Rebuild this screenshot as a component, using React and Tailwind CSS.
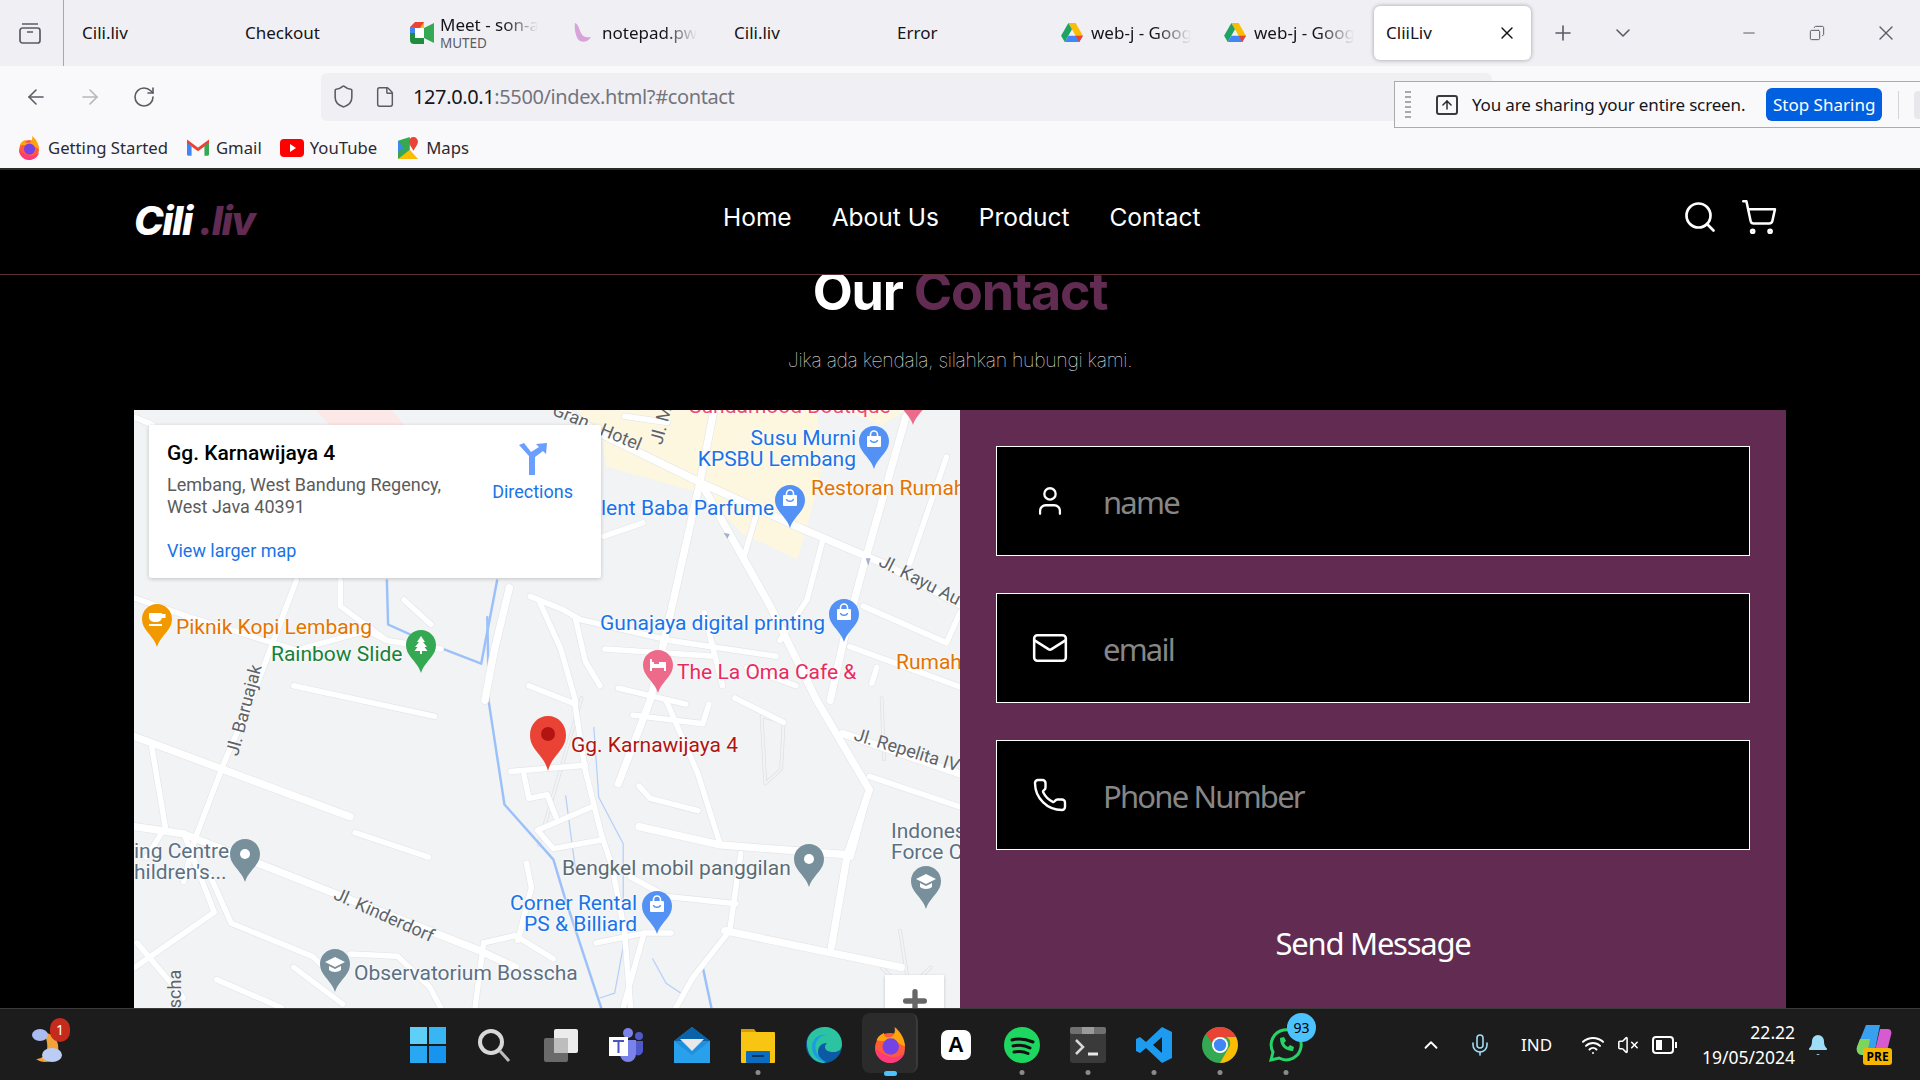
import React from 'react';
import { ArrowLeft, ArrowRight, ChevronDown, ChevronUp, Copy, Mail, Mic, Minus, Phone, Plus, RotateCw, Search, ShoppingCart, User, VolumeX, Wifi, X, File, Shield, Bell, ArrowUp } from 'lucide-react';

const TABS = ['Cili.liv', 'Checkout', 'Meet', 'notepad', 'Cili.liv', 'Error', 'drive', 'drive'];

const ROADS_MAIN = [
  '449,327 490,354 574,395 651,430 721,460 790,497',
  '583,335 572,392 550,490 542,525 531,572 505,640',
  '574,397 629,495 667,572 710,645 692,698 679,773',
  '740,340 705,463 689,523 678,572',
  '106,600 286,667',
  '110,675 150,681 211,705 391,776 421,790',
  '688,599 790,634',
  '522,675 588,690 692,698',
  '592,760 736,790',
  '416,480 404,530 396,572',
];

const ROADS = [
  '672,441 659,490 637,523',
  '618,419 607,457',
  '433,487 460,498 474,506 547,523 634,536',
  '494,530 583,536',
  '705,495 773,525 784,500',
  '694,528 784,561',
  '716,545 712,558',
  '773,373 743,460',
  '525,427 493,438',
  '106,487 155,504 242,531 300,515 316,523',
  '242,474 205,572 183,623 159,686 150,720',
  '278,474 278,495 316,523 360,530',
  '172,716 189,754 255,781 275,800',
  '286,779 325,781 351,806 360,823',
  '395,770 388,823',
  '395,770 421,764 452,783',
  '430,705 434,725 423,768',
  '469,572 478,629 491,681 500,708 510,760 515,823',
  '417,630 478,625',
  '428,633 432,652 447,649 454,667',
  '483,659 439,678 452,693 491,686',
  '544,572 570,632 588,689',
  '710,634 784,659',
  '605,697 596,760 566,798 552,823',
  '515,716 544,732 601,738',
  '487,770 526,762 548,762',
  '526,762 509,823',
  '522,642 531,652 570,662',
  '517,584 574,591 579,575',
  '710,645 695,700',
  '124,610 135,675 120,700',
  '150,680 175,745 110,790',
  '112,770 150,815',
  '177,800 230,823',
  '240,790 280,820',
  '350,700 290,680',
  '240,560 355,585',
  '440,490 458,530 470,572',
  '575,500 590,560',
  '108,340 125,347',
  '510,340 545,345',
  '470,505 478,540 490,560',
  '505,562 560,575',
  '432,560 470,575',
  '600,570 640,590',
  '610,545 650,560',
  '330,490 352,510',
];

const ROADS_THIN = [
  '622,585 625,640 638,628 640,590 622,585',
  '720,570 722,620',
  '735,760 745,823',
  '720,790 740,810 760,790',
  '440,690 475,570',
];

const WATER = [
  '316,474 317,510 357,528 393,542 406,474',
  '398,504 399,555 399,572 412,657 452,702 461,732 491,823',
  '574,790 581,823',
];
const WATER_THIN = [
  '485,594 489,651 509,689 509,773 502,811 490,815',
  '533,783 544,803 559,813',
  '462,650 470,710',
];

function Pin({ pos, color = '#5491f5', children }) {
  return (
    <svg viewBox="0 0 30 43" className={`absolute w-[30px] h-[43px] ${pos}`}>
      <path d="M15 0C6.7 0 0 6.7 0 15c0 5 2 8.5 5 12.5 4 5 8 9 10 15.5 2-6.5 6-10.5 10-15.5 3-4 5-7.5 5-12.5C30 6.7 23.3 0 15 0z" fill={color} />
      {children}
    </svg>
  );
}

const Bag = () => (
  <g fill="none" stroke="#fff">
    <rect x="8" y="10" width="14" height="11" rx="1" fill="#fff" stroke="none" />
    <path d="M11.5 10V8.5a3.5 3.5 0 0 1 7 0V10" strokeWidth="1.6" />
    <path d="M11.5 14c.5 3 6.500 3 7 0" stroke="#5491f5" strokeWidth="1.4" />
  </g>
);
const Dot = () => <circle cx="15" cy="15" r="5" fill="#fff" />;
const Cap = () => (
  <g fill="#fff">
    <path d="M15 8l10 5-10 5-10-5z" />
    <path d="M9 17v4c3 2.500 9 2.500 12 0v-4l-6 3z" />
  </g>
);

const LABEL = "absolute mt-[1px] -translate-y-1/2 whitespace-nowrap text-[21px] leading-[21px] [text-shadow:0_0_2px_#fff,0_0_3px_#fff]";
const ROAD_LABEL = "absolute -translate-x-1/2 -translate-y-1/2 whitespace-nowrap text-[18px] leading-none text-[#5f6368] [text-shadow:0_0_2px_#fff]";

function MapPanel() {
  return (
    <div className="relative w-[826px] h-full overflow-hidden bg-[#f1f3f4] font-['Roboto',sans-serif]">
      <svg viewBox="109.500 335 674.500 488" className="absolute left-0 top-0 w-[826px] h-[598px]" fill="none" strokeLinecap="round" strokeLinejoin="round">
        <path d="M555 335H667L672 381 659 430 651 457 607 436 574 403 495 381 491 354 470 335z" fill="#fef7e0" />
        <path d="M258 335H320L330 347H270z" fill="#fce8e6" />
        <path d="M690 335H740L720 347z" fill="#fef7e0" />
        {ROADS_THIN.map((p) => <polyline key={p} points={p} stroke="#dfe1e5" strokeWidth="3" />)}
        {ROADS_THIN.map((p) => <polyline key={p} points={p} stroke="#f1f3f4" strokeWidth="1.800" />)}
        {WATER.map((p) => <polyline key={p} points={p} stroke="#9cc0f9" strokeWidth="2" />)}
        {WATER_THIN.map((p) => <polyline key={p} points={p} stroke="#b4d0fa" strokeWidth="1" />)}
        {ROADS.map((p) => <polyline key={p} points={p} stroke="#e3e5e8" strokeWidth="5.500" />)}
        {ROADS_MAIN.map((p) => <polyline key={p} points={p} stroke="#e3e5e8" strokeWidth="7" />)}
        {ROADS.map((p) => <polyline key={p} points={p} stroke="#fff" strokeWidth="4.500" />)}
        {ROADS_MAIN.map((p) => <polyline key={p} points={p} stroke="#fff" strokeWidth="6" />)}
        <path d="M594 440l-3-5 5 1zM709 462l-2-6h4z" fill="#a6b1cf" />
      </svg>

      <div className={`${LABEL} left-[555px] top-[-5px] text-[#ea4c70]`}>Sundamood Boutique</div>
      <div className={`${LABEL} right-[104px] top-[38px] text-right text-[#1a73e8]`}>Susu Murni<br />KPSBU Lembang</div>
      <div className={`${LABEL} left-[677px] top-[77px] text-[#e37400]`}>Restoran Rumah</div>
      <div className={`${LABEL} left-[467px] top-[97px] text-[#1a73e8]`}>lent Baba Parfume</div>
      <div className={`${LABEL} left-[466px] top-[212px] text-[#1a73e8]`}>Gunajaya digital printing</div>
      <div className={`${LABEL} left-[762px] top-[251px] text-[#e37400]`}>Rumah</div>
      <div className={`${LABEL} left-[543px] top-[261px] text-[#ea2a5c]`}>The La Oma Cafe &amp;</div>
      <div className={`${LABEL} left-[42px] top-[216px] text-[#e37400]`}>Piknik Kopi Lembang</div>
      <div className={`${LABEL} left-[137px] top-[243px] text-[#188038]`}>Rainbow Slide</div>
      <div className={`${LABEL} left-[437px] top-[334px] text-[#b31412]`}>Gg. Karnawijaya 4</div>
      <div className={`${LABEL} left-0 top-[451px] text-[#5b7083]`}>ing Centre<br />hildren's...</div>
      <div className={`${LABEL} left-[428px] top-[457px] text-[#5b6b75]`}>Bengkel mobil panggilan</div>
      <div className={`${LABEL} left-[757px] top-[431px] text-[#5b7083]`}>Indones<br />Force C</div>
      <div className={`${LABEL} right-[323px] top-[503px] text-right text-[#1a73e8]`}>Corner Rental<br />PS &amp; Billiard</div>
      <div className={`${LABEL} left-[220px] top-[562px] text-[#5b7083]`}>Observatorium Bosscha</div>

      <div className={`${ROAD_LABEL} left-[437px] top-[6px] rotate-[22deg]`}>Gran</div>
      <div className={`${ROAD_LABEL} left-[487px] top-[27px] rotate-[22deg]`}>Hotel</div>
      <div className={`${ROAD_LABEL} left-[527px] top-[15px] -rotate-[75deg]`}>Jl. M</div>
      <div className={`${ROAD_LABEL} left-[786px] top-[170px] rotate-[27deg]`}>Jl. Kayu Au</div>
      <div className={`${ROAD_LABEL} left-[773px] top-[340px] rotate-[17deg]`}>Jl. Repelita IV</div>
      <div className={`${ROAD_LABEL} left-[110px] top-[300px] -rotate-[75deg]`}>Jl. Baruajak</div>
      <div className={`${ROAD_LABEL} left-[250px] top-[505px] rotate-[24deg]`}>Jl. Kinderdorf</div>
      <div className={`${ROAD_LABEL} left-[41px] top-[579px] -rotate-90`}>scha</div>

      <Pin pos="left-[764px] top-[-28px]" color="#ee6a8b" />
      <Pin pos="left-[725px] top-[16px]"><Bag /></Pin>
      <Pin pos="left-[641px] top-[75px]"><Bag /></Pin>
      <Pin pos="left-[695px] top-[189px]"><Bag /></Pin>
      <Pin pos="left-[509px] top-[240px]" color="#ee6a8b">
        <path d="M7 9h2v3h14v9h-2v-3H9v3H7z" fill="#fff" /><rect x="11" y="11" width="5" height="3" fill="#ee6a8b" />
      </Pin>
      <Pin pos="left-[8px] top-[194px]" color="#f29900">
        <path d="M7 9h13v4a5 5 0 0 1-5 5h-3a5 5 0 0 1-5-5zM20 10h3.500v4H20zM7 20h13v2H7z" fill="#fff" />
      </Pin>
      <Pin pos="left-[272px] top-[220px]" color="#34a853">
        <path d="M15 6l4 6h-2l4 5h-2.500l3 4H16v3h-2v-3H8.500l3-4H9l4-5h-2z" fill="#fff" />
      </Pin>
      <Pin pos="left-[96px] top-[429px]" color="#78909c"><Dot /></Pin>
      <Pin pos="left-[660px] top-[434px]" color="#78909c"><Dot /></Pin>
      <Pin pos="left-[777px] top-[456px]" color="#78909c"><Cap /></Pin>
      <Pin pos="left-[508px] top-[481px]"><Bag /></Pin>
      <Pin pos="left-[186px] top-[539px]" color="#78909c"><Cap /></Pin>
      <svg viewBox="0 0 36 55" className="absolute left-[396px] top-[306px] w-[36px] h-[55px]">
        <path d="M18 0C8 0 0 8 0 19c0 7 3 12 7 17 5 6 9 11 11 19 2-8 6-13 11-19 4-5 7-10 7-17C36 8 28 0 18 0z" fill="#ea4335" />
        <circle cx="18" cy="18" r="7" fill="#b31412" />
      </svg>

      <div className="absolute left-[15px] top-[15px] w-[452px] h-[153px] flex justify-between bg-white rounded-[2px] shadow-[0_1px_4px_rgba(0,0,0,0.2)] pl-[18px] pt-[16px] pr-[28px]">
        <div>
          <div className="text-[21px] leading-[24px] font-medium text-black">Gg. Karnawijaya 4</div>
          <div className="mt-[9px] text-[18px] leading-[22px] text-[#5b5b5b]">Lembang, West Bandung Regency,<br />West Java 40391</div>
          <div className="mt-[22px] text-[18px] leading-[22px] text-[#1a73e8]">View larger map</div>
        </div>
        <div className="flex flex-col items-center pt-[2px]">
          <svg viewBox="0 0 30 32" className="w-[30px] h-[32px]">
            <path d="M1 2l5-2 7 9 8-5-3-3 11-1-1 11-3-3-8 6v18h-6V13z" fill="#6a9eff" />
          </svg>
          <div className="mt-[6px] text-[18px] leading-[22px] text-[#1a73e8]">Directions</div>
        </div>
      </div>

      <div className="absolute left-[751px] top-[565px] w-[59px] h-[59px] flex justify-center pt-[10px] bg-white shadow-[0_1px_3px_rgba(0,0,0,0.2)]">
        <Plus size={32} strokeWidth={4} className="text-[#666]" />
      </div>
    </div>
  );
}

function Field({ icon: Icon, text, size = 34 }) {
  return (
    <div className="flex items-center h-[110px] bg-black border border-white">
      <div className="w-[106px] flex justify-center text-white">
        <Icon size={size} strokeWidth={1.6} />
      </div>
      <div className="mt-[3px] text-[31px] leading-none text-[#868686] font-['Noto_Sans',sans-serif] tracking-[-1.8px]">{text}</div>
    </div>
  );
}

function TabIconMeet() {
  return (
    <svg viewBox="0 0 24 22" className="w-[24px] h-[22px]">
      <path d="M0 5l5-5h9v6H5v5H0z" fill="#ea4335" />
      <path d="M0 11h5v5h9v6H4a4 4 0 0 1-4-4z" fill="#1e8e3e" />
      <path d="M5 6h9v10H5z" fill="#fff" />
      <path d="M14 6l10-5v20l-10-5z" fill="#34a853" />
      <path d="M0 5h5v6H0z" fill="#4285f4" />
      <path d="M14 0v6h-4z" fill="#fbbc04" />
    </svg>
  );
}

function DriveIcon() {
  return (
    <svg viewBox="0 0 24 22" className="w-[22px] h-[20px] shrink-0">
      <path d="M8 0h8l8 14h-8z" fill="#fbbc04" />
      <path d="M8 0l4 7L4 21l-4-7z" fill="#1ea362" />
      <path d="M4 21l4-7h16l-4 7z" fill="#4285f4" />
      <path d="M16 14h8l-4 7z" fill="#ea4335" />
    </svg>
  );
}

function FirefoxIcon({ size = 24 }) {
  return (
    <svg viewBox="0 0 24 24" width={size} height={size}>
      <circle cx="12" cy="14" r="10" fill="#ff5a3c" />
      <path d="M3 9c1-3 3-4 5-5 0 2 1 3 3 3 3 0 5-3 4-7 4 3 7 8 7 13l-6-3z" fill="#ffa30f" />
      <circle cx="12.500" cy="13" r="5.500" fill="#7542e5" />
      <path d="M2 14c1 6 5 10 10 10 4 0 8-2 10-7-3 3-8 4-12 2-3-1-6-3-8-5z" fill="#ff3a7c" />
    </svg>
  );
}

function Tabs() {
  const fade = "overflow-hidden [mask-image:linear-gradient(to_right,#000_65%,transparent)]";
  return (
    <div className="flex items-center h-[66px] bg-[#f0f0f4] text-[17px] text-[#15141a] font-['Noto_Sans',sans-serif]">
      <div className="flex items-center justify-center w-[64px] h-full border-r border-[#a8a8ac]">
        <svg viewBox="0 0 24 24" className="w-[24px] h-[24px] -ml-[4px] text-[#5b5b66]" fill="none" stroke="currentColor" strokeWidth="1.700">
          <rect x="2" y="7" width="20" height="15" rx="2.500" /><path d="M4 3h16M9 11h6" />
        </svg>
      </div>
      <div className="w-[6px]" />
      {TABS.map((t, i) => (
        <div key={i} className="flex items-center w-[163px] h-full pl-[12px] whitespace-nowrap">
          {t === 'Meet' && (
            <div className="flex items-center gap-[6px] pl-[2px]">
              <TabIconMeet />
              <div className="-mt-[1px]">
                <div className={`w-[98px] leading-[20px] ${fade}`}>Meet - son-a</div>
                <div className="text-[13.500px] leading-[16px] text-[#5b5b66]">MUTED</div>
              </div>
            </div>
          )}
          {t === 'notepad' && (
            <div className="flex items-center gap-[9px] pl-[2px]">
              <svg viewBox="0 0 20 22" className="w-[20px] h-[22px]"><path d="M2 1c3 1 4 5 6 10 2 4 5 5 10 4-2 4-7 6-11 4C3 17 1 7 2 1z" fill="#d8a3d8" /></svg>
              <span className={`w-[95px] ${fade}`}>notepad.pw</span>
            </div>
          )}
          {t === 'drive' && (
            <div className="flex items-center gap-[8px] pl-[1px]">
              <DriveIcon />
              <span className={`w-[100px] ${fade}`}>web-j - Goog</span>
            </div>
          )}
          {!['Meet', 'notepad', 'drive'].includes(t) && <span>{t}</span>}
        </div>
      ))}
      <div className="flex items-center justify-between w-[157px] h-[54px] pl-[12px] pr-[14px] bg-white rounded-[6px] shadow-[0_0_4px_rgba(0,0,0,0.35)]">
        <span>CliiLiv</span>
        <X size={20} strokeWidth={1.7} />
      </div>
      <div className="flex items-center text-[#5b5b66]">
        <Plus size={24} strokeWidth={1.6} className="ml-[20px]" />
        <ChevronDown size={24} strokeWidth={1.6} className="ml-[36px]" />
        <Minus size={18} strokeWidth={1.4} className="ml-[105px]" />
        <Copy size={16} strokeWidth={1.5} className="ml-[51px] -scale-x-100" />
        <X size={24} strokeWidth={1.4} className="ml-[49px]" />
      </div>
    </div>
  );
}

function Toolbar() {
  return (
    <div className="relative h-[104px] bg-[#f9f9fb] border-b-2 border-[#2a2a2a] font-['Noto_Sans',sans-serif] text-[#15141a]">
      <div className="flex items-center h-[60px] pt-[1px]">
        <ArrowLeft size={24} strokeWidth={1.6} className="ml-[24px] text-[#5b5b66]" />
        <ArrowRight size={24} strokeWidth={1.6} className="ml-[30px] text-[#b6b6bb]" />
        <RotateCw size={24} strokeWidth={1.6} className="ml-[30px] text-[#5b5b66]" />
        <div className="flex items-center ml-[165px] w-[1171px] h-[48px] rounded-[6px] bg-[#f0f0f4]">
          <Shield size={25} strokeWidth={1.5} className="ml-[10px] text-[#5b5b66]" />
          <File size={22} strokeWidth={1.6} className="ml-[18px] text-[#5b5b66]" />
          <div className="ml-[17px] text-[20px] leading-none tracking-[-0.38px]">127.0.0.1<span className="text-[#74747c]">:5500/index.html?#contact</span></div>
        </div>
      </div>
      <div className="flex items-center h-[38px] pt-[5px] text-[16.700px] text-[#2b2a33]">
        <div className="ml-[17px]"><FirefoxIcon /></div>
        <span className="ml-[7px]">Getting Started</span>
        <svg viewBox="0 0 24 18" className="ml-[19px] w-[22px] h-[17px]">
          <path d="M1 17V3l11 8 11-8v14" fill="none" stroke="#ea4335" strokeWidth="3.200" />
          <path d="M0 4v12a2 2 0 0 0 2 2h3V7z" fill="#4285f4" />
          <path d="M24 4v12a2 2 0 0 1-2 2h-3V7z" fill="#34a853" />
        </svg>
        <span className="ml-[7px]">Gmail</span>
        <svg viewBox="0 0 24 18" className="ml-[18px] w-[24px] h-[18px]">
          <rect width="24" height="18" rx="4" fill="#f00" /><path d="M10 5l6 4-6 4z" fill="#fff" />
        </svg>
        <span className="ml-[6px]">YouTube</span>
        <svg viewBox="0 0 22 24" className="ml-[21px] w-[20px] h-[22px]">
          <path d="M0 4l13-4v22L0 24z" fill="#34a853" /><path d="M0 24l13-10 9 10z" fill="#fbbc04" /><path d="M0 4l6 8L0 16z" fill="#4285f4" />
          <path d="M17 0a5 5 0 0 1 5 5c0 3-3 6-5 10-2-4-5-7-5-10a5 5 0 0 1 5-5z" fill="#ea4335" />
        </svg>
        <span className="ml-[8px]">Maps</span>
      </div>

      {/* sharing indicator sits over the toolbar */}
      <div className="absolute left-[1394px] top-[15px] flex items-center w-[526px] h-[47px] bg-[#f9f9fb] border border-[#ababab] border-r-0 text-[17px]">
        <div className="ml-[10px] w-[6px] h-[28px] bg-[repeating-linear-gradient(to_bottom,#a8a8a8_0,#a8a8a8_2px,transparent_2px,transparent_5px)]" />
        <div className="ml-[25px] flex items-center justify-center w-[22px] h-[20px] border-2 border-[#3a3a40] rounded-[3px]">
          <ArrowUp size={14} strokeWidth={2.5} className="text-[#2a2a2e]" />
        </div>
        <span className="ml-[14px] whitespace-nowrap tracking-[-0.15px]">You are sharing your entire screen.</span>
        <div className="ml-[21px] flex items-center justify-center w-[116px] h-[33px] rounded-[6px] bg-[#0060df] text-white whitespace-nowrap">Stop Sharing</div>
        <div className="ml-[16px] w-px h-[28px] bg-[#d4d4d8]" />
        <div className="ml-[15px] w-[6px] h-[28px] rounded-l-[4px] bg-[#e8e8ec]" />
      </div>
    </div>
  );
}

function Header() {
  return (
    <div className="relative flex items-center h-[105px] bg-black border-b border-[#5c3232] text-white font-['Inter',sans-serif] shrink-0">
      <div className="absolute left-[134px] top-[23px] text-[40px] font-extrabold italic tracking-[-1.5px] leading-[56px]">
        Cili <span className="text-[#622c52]">.liv</span>
      </div>
      <div className="flex items-center gap-[40px] ml-[723px] -mt-[9px] text-[24.500px] leading-none">
        <span>Home</span>
        <span>About Us</span>
        <span>Product</span>
        <span>Contact</span>
      </div>
      <Search size={36} strokeWidth={1.8} className="absolute left-[1682px] top-[29px]" />
      <ShoppingCart size={38} strokeWidth={1.6} className="absolute left-[1740px] top-[28px]" />
    </div>
  );
}

function Taskbar() {
  const dot = 'absolute bottom-[-12px] left-1/2 -translate-x-1/2 w-[5px] h-[5px] rounded-full bg-[#8a8a8a]';
  return (
    <div className="relative flex items-center h-[72px] shrink-0 bg-[#1c1c1c] border-t border-[#3a3a3a] text-white font-['Noto_Sans',sans-serif]">
      <div className="relative w-[395px] h-full">
        <svg viewBox="0 0 36 40" className="absolute left-[30px] top-[18px] w-[36px] h-[40px]">
          <path d="M14 6c10 0 16 8 14 20-2 8-14 12-22 6 8 0 16-8 8-26z" fill="#f2a23a" />
          <ellipse cx="10" cy="8" rx="8" ry="6" fill="#a9bdf0" /><ellipse cx="22" cy="28" rx="10" ry="7" fill="#bccdf5" />
        </svg>
        <div className="absolute left-[50px] top-[9px] flex items-center justify-center w-[20px] h-[24px] rounded-full bg-[#c42b1c] text-[14px] leading-none">1</div>
      </div>

      <div className="flex items-center">
        <div className="flex justify-center w-[66px]">
          <svg viewBox="0 0 36 36" className="w-[36px] h-[36px]">
            <rect width="17" height="17" fill="#5ed0f8" /><rect x="19" width="17" height="17" fill="#38b6f3" />
            <rect y="19" width="17" height="17" fill="#2aa7f2" /><rect x="19" y="19" width="17" height="17" fill="#1694ee" />
          </svg>
        </div>
        <div className="flex justify-center w-[66px]">
          <svg viewBox="0 0 36 36" className="w-[36px] h-[36px]" fill="none">
            <circle cx="15" cy="15" r="11" stroke="#d8d8d8" strokeWidth="4" /><path d="M24 24l9 10" stroke="#bcbcbc" strokeWidth="3" />
          </svg>
        </div>
        <div className="flex justify-center w-[66px]">
          <svg viewBox="0 0 36 36" className="w-[36px] h-[36px]">
            <rect x="12" y="2" width="24" height="24" rx="2" fill="#ececec" /><rect x="2" y="11" width="24" height="24" rx="2" fill="#6a6a6a" />
            <rect x="12" y="11" width="14" height="15" fill="#bdbdbd" />
          </svg>
        </div>
        <div className="flex justify-center w-[66px]">
          <svg viewBox="0 0 36 36" className="w-[36px] h-[36px]">
            <circle cx="20" cy="6" r="5" fill="#7b83eb" /><circle cx="31" cy="9" r="4" fill="#5059c9" />
            <path d="M12 13h16v14a8 8 0 0 1-16 0z" fill="#7b83eb" /><path d="M28 14h7v10a5 5 0 0 1-7 4z" fill="#5059c9" />
            <rect x="1" y="10" width="19" height="19" fill="#fff" /><path d="M5 13h11v2h-4.500v11h-2V15H5z" fill="#4b53bc" />
          </svg>
        </div>
        <div className="flex justify-center w-[66px]">
          <svg viewBox="0 0 36 36" className="w-[36px] h-[36px]">
            <path d="M18 0l18 14v22H0V14z" fill="#1f8fe0" /><path d="M18 0L0 14h36z" fill="#0a62a8" />
            <path d="M6 12h24L18 24z" fill="#e8e8e8" /><path d="M0 14l18 14 18-14v22H0z" fill="#28a0ec" />
          </svg>
        </div>
        <div className="relative flex justify-center w-[66px]">
          <svg viewBox="0 0 36 36" className="w-[36px] h-[36px]">
            <path d="M1 2h13l3 4H1z" fill="#d99a00" /><rect x="1" y="5" width="34" height="31" rx="1" fill="#f9c513" />
            <rect x="6" y="24" width="24" height="12" rx="1" fill="#0c6cc0" /><rect x="12" y="28" width="12" height="2" fill="#04345f" />
          </svg>
          <div className={dot} />
        </div>
        <div className="flex justify-center w-[66px]">
          <svg viewBox="0 0 36 36" className="w-[36px] h-[36px]">
            <circle cx="18" cy="18" r="18" fill="#0c59a4" />
            <path d="M1 14C3 5 11 0 19 0c9 0 17 7 17 17 0 6-4 8-8 8-6 0-9-2-9-5 0-2 1-3 2-4-6 0-9 4-9 9 0 6 5 10 8 11C10 37 0 29 1 14z" fill="#2cc4a0" />
            <path d="M6 20c0-8 7-13 14-12-9 1-13 10-9 18 2 4 6 8 10 9-9 0-15-7-15-15z" fill="#1b9de2" />
          </svg>
        </div>
        <div className="relative flex justify-center items-center w-[66px]">
          <div className="absolute top-[-14px] w-[56px] h-[60px] rounded-[8px] bg-[#2b2b2b] border-r-2 border-[#3a3a3a]" />
          <div className="relative"><FirefoxIcon size={36} /></div>
          <div className="absolute bottom-[-13px] w-[13px] h-[5px] rounded-full bg-[#4cc2ff]" />
        </div>
        <div className="flex justify-center w-[66px]">
          <div className="flex items-center justify-center w-[30px] h-[30px] rounded-[7px] bg-white text-black text-[22px] font-bold leading-none font-['Liberation_Sans',sans-serif]">A</div>
        </div>
        <div className="relative flex justify-center w-[66px]">
          <svg viewBox="0 0 36 36" className="w-[36px] h-[36px]" fill="none">
            <circle cx="18" cy="18" r="18" fill="#1ed760" />
            <path d="M8 13c7-2 14-1 21 2M9 19c6-1.500 12-1 17 2M10 25c5-1 10-.5 14 1.500" stroke="#111" strokeWidth="3" strokeLinecap="round" />
          </svg>
          <div className={dot} />
        </div>
        <div className="relative flex justify-center w-[66px]">
          <svg viewBox="0 0 36 36" className="w-[36px] h-[36px]" fill="none">
            <rect width="36" height="36" rx="3" fill="#3a3a3a" /><rect width="36" height="7" rx="2" fill="#707070" /><rect x="12" width="12" height="7" fill="#9a9a9a" />
            <path d="M6 13l7 7-7 7" stroke="#d8d8d8" strokeWidth="2.500" /><path d="M18 27h10" stroke="#e8e8e8" strokeWidth="3" />
          </svg>
          <div className={dot} />
        </div>
        <div className="relative flex justify-center w-[66px]">
          <svg viewBox="0 0 36 36" className="w-[36px] h-[36px]">
            <path d="M26 0l10 5v26l-10 5-16-15-6 5-4-2V12l4-2 6 5zM26 10l-9 8 9 8z" fill="#1d9bf0" />
          </svg>
          <div className={dot} />
        </div>
        <div className="relative flex justify-center w-[66px]">
          <svg viewBox="0 0 36 36" className="w-[36px] h-[36px]">
            <circle cx="18" cy="18" r="18" fill="#34a853" />
            <path d="M18 0a18 18 0 0 1 16 10H18a8 8 0 0 0-8 6L4 7a18 18 0 0 1 14-7z" fill="#ea4335" />
            <path d="M34 10a18 18 0 0 1-16 26l8-14a8 8 0 0 0-1-12z" fill="#fbbc04" />
            <circle cx="18" cy="18" r="8" fill="#fff" /><circle cx="18" cy="18" r="6.200" fill="#4285f4" />
          </svg>
          <div className={dot} />
        </div>
        <div className="relative flex justify-center w-[66px]">
          <svg viewBox="0 0 36 36" className="w-[36px] h-[36px]" fill="none">
            <path d="M3 33l2-8a15 15 0 1 1 6 6z" stroke="#25d366" strokeWidth="3" />
            <path d="M12 11c0 8 5 13 13 13l1-4-4-2-2 2c-2-1-3-2-4-4l2-2-2-4z" fill="#25d366" />
          </svg>
          <div className="absolute top-[-14px] left-[34px] flex items-center justify-center w-[29px] h-[29px] rounded-full bg-[#4cc2ff] text-black text-[14px]">93</div>
          <div className={dot} />
        </div>
      </div>

      <div className="flex items-center flex-1 h-full">
        <ChevronUp size={22} strokeWidth={2} className="ml-[101px]" />
        <Mic size={24} strokeWidth={1.6} className="ml-[26px] text-[#9fdcf5]" />
        <span className="ml-[29px] text-[17px]">IND</span>
        <Wifi size={24} strokeWidth={2} className="ml-[29px]" />
        <VolumeX size={22} strokeWidth={1.7} className="ml-[12px]" />
        <svg viewBox="0 0 26 20" className="ml-[13px] w-[26px] h-[20px]" fill="none" stroke="#fff" strokeWidth="2">
          <rect x="1" y="2" width="20" height="16" rx="3" /><rect x="4" y="5" width="6" height="10" fill="#fff" stroke="none" /><path d="M24 7v6" />
        </svg>
        <div className="ml-[11px] w-[106px] text-right text-[17.500px] leading-[25px]">
          <div>22.22</div>
          <div>19/05/2024</div>
        </div>
        <Bell size={24} fill="#9fdcf5" strokeWidth={0} className="ml-[11px]" />
        <div className="relative ml-[26px] w-[36px] h-[40px]">
          <svg viewBox="0 0 36 36" className="w-[36px] h-[36px]">
            <path d="M10 0h14l-6 30H6C2 30 0 26 1 22z" fill="#39a0f0" /><path d="M24 4h8c3 0 4 3 3 6l-5 20H18z" fill="#d65bd0" />
            <path d="M4 14h10l-3 16H6c-4 0-6-4-5-8z" fill="#7fd45a" />
          </svg>
          <div className="absolute left-[7px] bottom-0 w-[29px] h-[17px] rounded-[3px] bg-[#f7b500] text-black text-[12px] leading-[17px] font-bold text-center">PRE</div>
        </div>
      </div>
    </div>
  );
}

export default function App() {
  return (
    <div className="flex flex-col w-[1920px] h-[1080px] overflow-hidden bg-black">
      <Tabs />
      <Toolbar />
      <Header />

      <div className="flex flex-col flex-1 min-h-0 bg-black">
        <div className="text-center h-[135px] shrink-0 font-['Inter',sans-serif]">
          <h1 className="text-[52px] leading-[46px] mt-[-6px] font-bold text-white tracking-[-1.2px]">
            Our <span className="text-[#622c52]">Contact</span>
          </h1>
          <p className="mt-[33px] text-[19.500px] leading-[24px] font-thin text-white tracking-[-0.3px]">Jika ada kendala, silahkan hubungi kami.</p>
        </div>

        <div className="flex flex-1 min-h-0 mx-[134px]">
          <MapPanel />
          <div className="flex-1 bg-[#622c52] px-[36px] pt-[36px]">
            <div className="flex flex-col gap-[37px]">
              <Field icon={User} text="name" />
              <Field icon={Mail} text="email" size={38} />
              <Field icon={Phone} text="Phone Number" size={36} />
            </div>
            <div className="mt-[71px] text-center text-white text-[31px] leading-[44px] font-['Noto_Sans',sans-serif] tracking-[-1.25px]">Send Message</div>
          </div>
        </div>
      </div>

      <Taskbar />
    </div>
  );
}
